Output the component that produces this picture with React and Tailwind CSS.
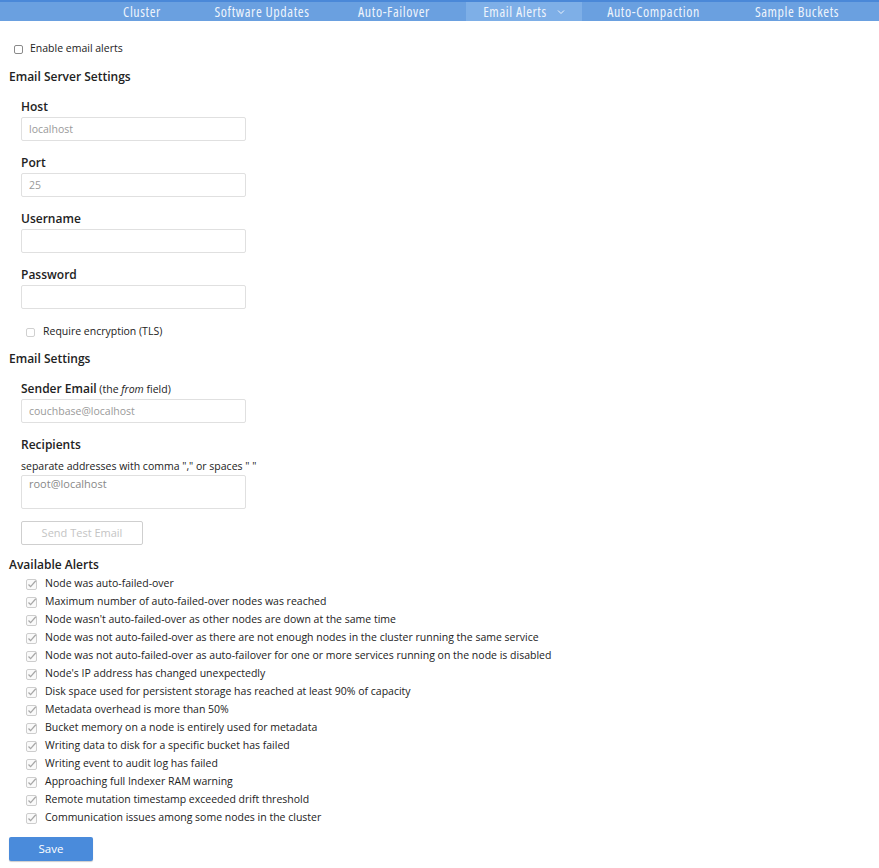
import { useState } from 'react';

const TABS = [
  { label: 'Cluster', w: 'w-[120px]' },
  { label: 'Software Updates', w: 'w-[120px]' },
  { label: 'Auto-Failover', w: 'w-[144px]' },
  { label: 'Email Alerts', w: 'w-[116px]', active: true },
  { label: 'Auto-Compaction', w: 'w-[143px]' },
  { label: 'Sample Buckets', w: 'w-[144px]' },
];

const ALERTS = [
  'Node was auto-failed-over',
  'Maximum number of auto-failed-over nodes was reached',
  "Node wasn't auto-failed-over as other nodes are down at the same time",
  'Node was not auto-failed-over as there are not enough nodes in the cluster running the same service',
  'Node was not auto-failed-over as auto-failover for one or more services running on the node is disabled',
  "Node's IP address has changed unexpectedly",
  'Disk space used for persistent storage has reached at least 90% of capacity',
  'Metadata overhead is more than 50%',
  'Bucket memory on a node is entirely used for metadata',
  'Writing data to disk for a specific bucket has failed',
  'Writing event to audit log has failed',
  'Approaching full Indexer RAM warning',
  'Remote mutation timestamp exceeded drift threshold',
  'Communication issues among some nodes in the cluster',
];

function CheckedBox() {
  return (
    <svg width="11" height="11" viewBox="0 0 11 11" className="shrink-0">
      <rect x="0.5" y="0.5" width="10" height="10" rx="1.5" fill="#fafafa" stroke="#cdcdcd" />
      <path d="M2.5 5.5 L4.6 7.6 L9.8 1.8" fill="none" stroke="#a8a8a8" strokeWidth="1.3" />
    </svg>
  );
}

function Field({ label, hint, placeholder, value, onChange, type = 'text' }) {
  return (
    <div className="mb-[12px]">
      <div className="h-[20px] leading-[20px] text-[12px] font-semibold text-[#222]">
        {label}
        {hint}
      </div>
      <input
        type={type}
        value={value}
        onChange={e => onChange(e.target.value)}
        placeholder={placeholder}
        disabled
        className="block w-[225px] h-[24px] border border-[#e0e0e0] rounded-[2px] bg-white px-[7px] text-[10.5px] text-[#888] placeholder:text-[#9a9a9a] outline-none"
      />
    </div>
  );
}

export default function App() {
  const [form, setForm] = useState({ user: '', pass: '' });

  return (
    <div className="min-h-screen bg-white text-[#222]" style={{ fontFamily: '"Open Sans", "Noto Sans", sans-serif' }}>
      {/* Tabs */}
      <div className="border-t-[2px] border-[#4a88d8] bg-[#6aa0e0] h-[21px] flex justify-end pr-[10px]">
        {TABS.map(t => (
          <div
            key={t.label}
            className={`${t.w} h-[19px] flex items-center justify-center text-[14px] tracking-[0.6px] text-[#eef4fc] ${t.active ? 'bg-[#7eafe7]' : ''}`}
            style={{ fontStretch: 'condensed' }}
          >
            {t.label}
            {t.active && (
              <svg width="8" height="6" viewBox="0 0 8 6" className="ml-[10px]">
                <path d="M1 1.5 L4 4.5 L7 1.5" fill="none" stroke="#eef4fc" strokeWidth="1" />
              </svg>
            )}
          </div>
        ))}
      </div>

      <div className="px-[9px]">
        <label className="flex items-center gap-[7px] mt-[21px] h-[14px] pl-[5px] text-[10.5px]">
          <span className="w-[9px] h-[9px] border border-[#8a8a8a] rounded-[2px] bg-white" />
          Enable email alerts
        </label>

        <div className="mt-[11px] h-[20px] leading-[20px] text-[12px] font-semibold">Email Server Settings</div>

        <div className="pl-[12px] mt-[10px]">
          <Field label="Host" placeholder="localhost" value="" onChange={() => {}} />
          <Field label="Port" placeholder="25" value="" onChange={() => {}} />
          <Field label="Username" value={form.user} onChange={v => setForm({ ...form, user: v })} />
          <Field label="Password" type="password" value={form.pass} onChange={v => setForm({ ...form, pass: v })} />
          <label className="flex items-center gap-[8px] pl-[5px] mt-[14px] h-[18px] text-[10.5px]">
            <span className="w-[9px] h-[9px] border border-[#d0d0d0] rounded-[2px] bg-white" />
            Require encryption (TLS)
          </label>
        </div>

        <div className="mt-[8px] h-[20px] leading-[20px] text-[12px] font-semibold">Email Settings</div>

        <div className="pl-[12px] mt-[10px]">
          <Field
            label="Sender Email"
            hint={<span className="font-normal text-[10.5px]"> (the <i>from</i> field)</span>}
            placeholder="couchbase@localhost"
            value=""
            onChange={() => {}}
          />
          <div className="h-[20px] leading-[20px] text-[12px] font-semibold">Recipients</div>
          <div className="h-[18px] leading-[18px] text-[10.5px] mt-[2px]">separate addresses with comma "," or spaces " "</div>
          <textarea
            disabled
            defaultValue="root@localhost"
            className="block w-[225px] h-[34px] border border-[#e0e0e0] rounded-[2px] bg-white px-[7px] py-0 text-[11px] leading-[16px] text-[#888] resize-none outline-none"
          />
          <button
            disabled
            className="mt-[12px] w-[122px] h-[24px] border border-[#cfcfcf] rounded-[2px] bg-white text-[11px] text-[#c4c4c4]"
          >
            Send Test Email
          </button>
        </div>

        <div className="mt-[10px] h-[20px] leading-[19px] text-[12px] font-semibold">Available Alerts</div>
        <div className="pl-[17px]">
          {ALERTS.map(a => (
            <div key={a} className="flex items-center gap-[8px] h-[18px] text-[10.5px]">
              <CheckedBox />
              {a}
            </div>
          ))}
        </div>

        <button className="mt-[10px] w-[84px] h-[24px] rounded-[2px] bg-[#4a8bdb] text-white text-[11.5px] shadow-[0_1px_1px_rgba(0,0,0,0.2)]">
          Save
        </button>
      </div>
    </div>
  );
}
